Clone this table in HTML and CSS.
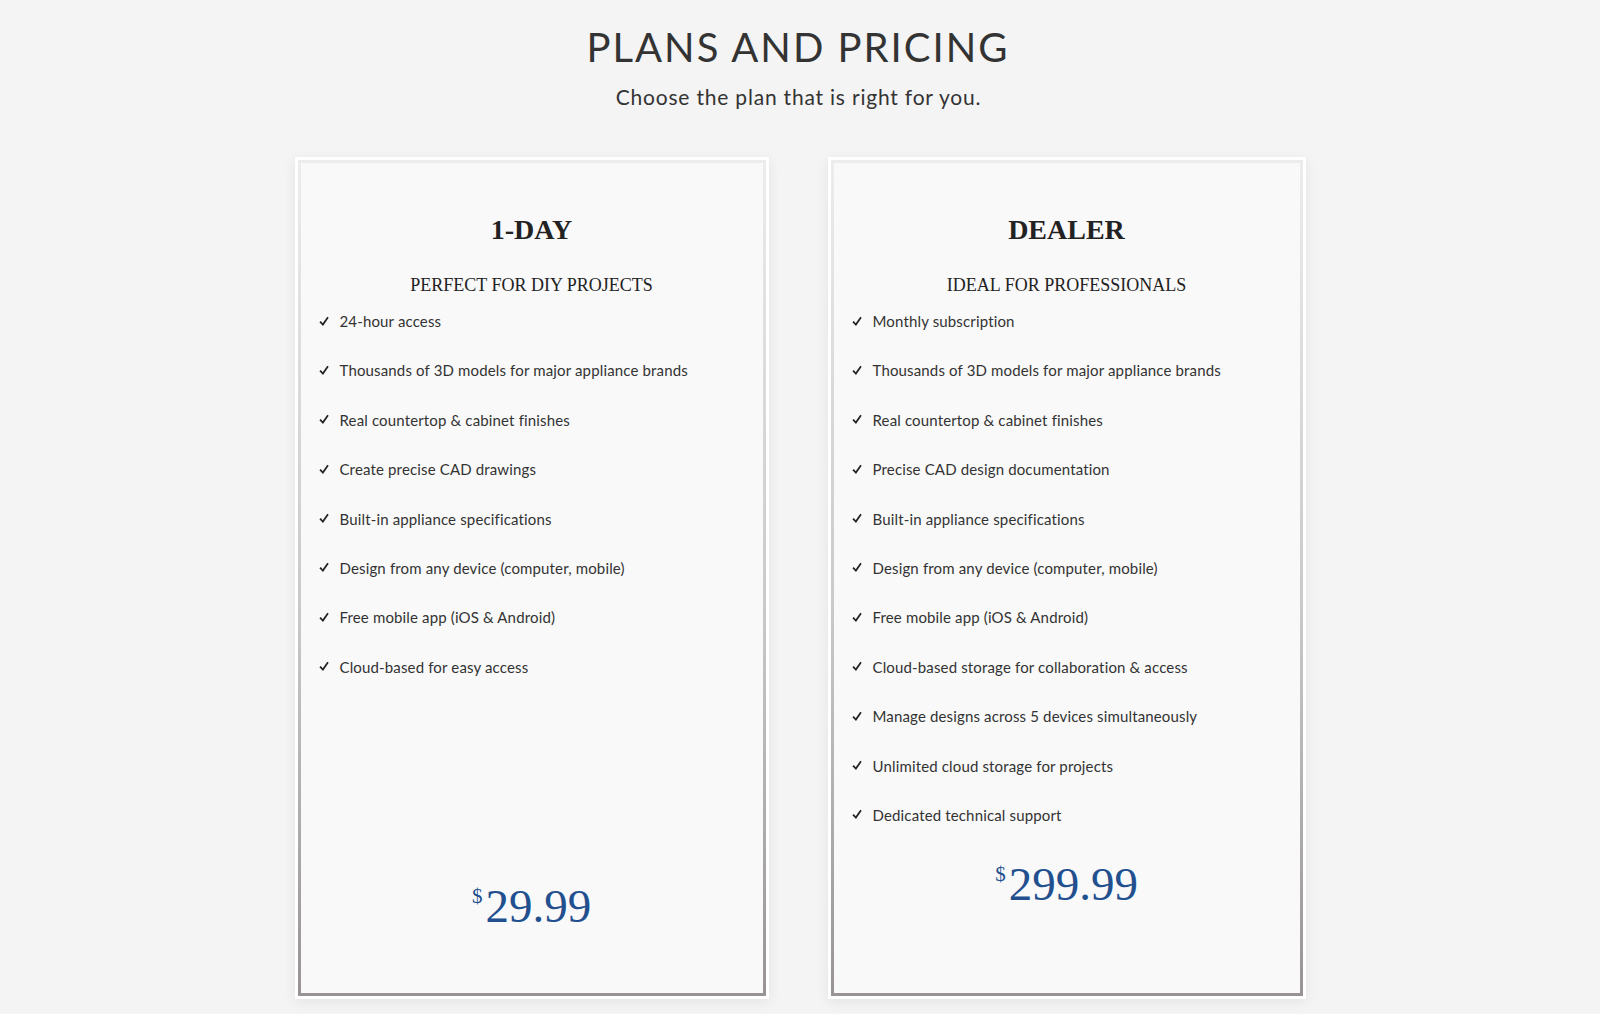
FILE: index.html
```html
<!DOCTYPE html>
<html lang="en">
<head>
<meta charset="utf-8">
<title>Plans and Pricing</title>
<link rel="stylesheet" href="styles.css">
</head>
<body>
<header class="intro">
  <h1 class="intro__title">PLANS AND PRICING</h1>
  <p class="intro__sub">Choose the plan that is right for you.</p>
</header>
<main class="plans">
  <section class="card card--day">
    <div class="card__inner">
      <h2 class="card__name">1-DAY</h2>
      <h3 class="card__tag">PERFECT FOR DIY PROJECTS</h3>
      <ul class="features">
        <li><svg class="tick" viewBox="0 0 10 10"><path d="M0.4 5.7 L1.8 4.6 L3.7 6.8 L8.3 0.3 L9.7 1.2 L4.0 9.5 Z"/></svg>24-hour access</li>
        <li><svg class="tick" viewBox="0 0 10 10"><path d="M0.4 5.7 L1.8 4.6 L3.7 6.8 L8.3 0.3 L9.7 1.2 L4.0 9.5 Z"/></svg>Thousands of 3D models for major appliance brands</li>
        <li><svg class="tick" viewBox="0 0 10 10"><path d="M0.4 5.7 L1.8 4.6 L3.7 6.8 L8.3 0.3 L9.7 1.2 L4.0 9.5 Z"/></svg>Real countertop &amp; cabinet finishes</li>
        <li><svg class="tick" viewBox="0 0 10 10"><path d="M0.4 5.7 L1.8 4.6 L3.7 6.8 L8.3 0.3 L9.7 1.2 L4.0 9.5 Z"/></svg>Create precise CAD drawings</li>
        <li><svg class="tick" viewBox="0 0 10 10"><path d="M0.4 5.7 L1.8 4.6 L3.7 6.8 L8.3 0.3 L9.7 1.2 L4.0 9.5 Z"/></svg>Built-in appliance specifications</li>
        <li><svg class="tick" viewBox="0 0 10 10"><path d="M0.4 5.7 L1.8 4.6 L3.7 6.8 L8.3 0.3 L9.7 1.2 L4.0 9.5 Z"/></svg>Design from any device (computer, mobile)</li>
        <li><svg class="tick" viewBox="0 0 10 10"><path d="M0.4 5.7 L1.8 4.6 L3.7 6.8 L8.3 0.3 L9.7 1.2 L4.0 9.5 Z"/></svg>Free mobile app (iOS &amp; Android)</li>
        <li><svg class="tick" viewBox="0 0 10 10"><path d="M0.4 5.7 L1.8 4.6 L3.7 6.8 L8.3 0.3 L9.7 1.2 L4.0 9.5 Z"/></svg>Cloud-based for easy access</li>
      </ul>
      <div class="price"><span class="price__cur">$</span>29.99</div>
    </div>
  </section>
  <section class="card card--dealer">
    <div class="card__inner">
      <h2 class="card__name">DEALER</h2>
      <h3 class="card__tag">IDEAL FOR PROFESSIONALS</h3>
      <ul class="features">
        <li><svg class="tick" viewBox="0 0 10 10"><path d="M0.4 5.7 L1.8 4.6 L3.7 6.8 L8.3 0.3 L9.7 1.2 L4.0 9.5 Z"/></svg>Monthly subscription</li>
        <li><svg class="tick" viewBox="0 0 10 10"><path d="M0.4 5.7 L1.8 4.6 L3.7 6.8 L8.3 0.3 L9.7 1.2 L4.0 9.5 Z"/></svg>Thousands of 3D models for major appliance brands</li>
        <li><svg class="tick" viewBox="0 0 10 10"><path d="M0.4 5.7 L1.8 4.6 L3.7 6.8 L8.3 0.3 L9.7 1.2 L4.0 9.5 Z"/></svg>Real countertop &amp; cabinet finishes</li>
        <li><svg class="tick" viewBox="0 0 10 10"><path d="M0.4 5.7 L1.8 4.6 L3.7 6.8 L8.3 0.3 L9.7 1.2 L4.0 9.5 Z"/></svg>Precise CAD design documentation</li>
        <li><svg class="tick" viewBox="0 0 10 10"><path d="M0.4 5.7 L1.8 4.6 L3.7 6.8 L8.3 0.3 L9.7 1.2 L4.0 9.5 Z"/></svg>Built-in appliance specifications</li>
        <li><svg class="tick" viewBox="0 0 10 10"><path d="M0.4 5.7 L1.8 4.6 L3.7 6.8 L8.3 0.3 L9.7 1.2 L4.0 9.5 Z"/></svg>Design from any device (computer, mobile)</li>
        <li><svg class="tick" viewBox="0 0 10 10"><path d="M0.4 5.7 L1.8 4.6 L3.7 6.8 L8.3 0.3 L9.7 1.2 L4.0 9.5 Z"/></svg>Free mobile app (iOS &amp; Android)</li>
        <li><svg class="tick" viewBox="0 0 10 10"><path d="M0.4 5.7 L1.8 4.6 L3.7 6.8 L8.3 0.3 L9.7 1.2 L4.0 9.5 Z"/></svg>Cloud-based storage for collaboration &amp; access</li>
        <li><svg class="tick" viewBox="0 0 10 10"><path d="M0.4 5.7 L1.8 4.6 L3.7 6.8 L8.3 0.3 L9.7 1.2 L4.0 9.5 Z"/></svg>Manage designs across 5 devices simultaneously</li>
        <li><svg class="tick" viewBox="0 0 10 10"><path d="M0.4 5.7 L1.8 4.6 L3.7 6.8 L8.3 0.3 L9.7 1.2 L4.0 9.5 Z"/></svg>Unlimited cloud storage for projects</li>
        <li><svg class="tick" viewBox="0 0 10 10"><path d="M0.4 5.7 L1.8 4.6 L3.7 6.8 L8.3 0.3 L9.7 1.2 L4.0 9.5 Z"/></svg>Dedicated technical support</li>
      </ul>
      <div class="price"><span class="price__cur">$</span>299.99</div>
    </div>
  </section>
</main>
</body>
</html>
```

FILE: styles.css
```css
* { box-sizing: border-box; }

html, body {
  margin: 0;
  padding: 0;
}

body {
  background: #f4f4f4;
  color: #333;
  font-family: Lato, "Noto Sans", "Liberation Sans", sans-serif;
  height: 1014px;
  overflow: hidden;
}

.intro {
  padding-top: 23px;
  text-align: center;
}

.intro__title {
  margin: 0;
  font-size: 40px;
  line-height: 48px;
  font-weight: 400;
  letter-spacing: 2px;
  padding-right: 4px;
  color: #333;
}

.intro__sub {
  margin: 13px 0 0;
  font-size: 21px;
  line-height: 25px;
  letter-spacing: 0.8px;
  padding-right: 3px;
  color: #333;
}

.plans {
  margin-top: 48px;
  display: grid;
  grid-template-columns: 474px 478px;
  justify-content: center;
  column-gap: 59px;
  align-items: stretch;
}

.card {
  background: #fff;
  padding: 3px;
  box-shadow: 0 3px 12px rgba(0, 0, 0, 0.07);
  display: flex;
}

.card__inner {
  flex: 1;
  display: flex;
  flex-direction: column;
  background: #f9f9f9;
  border: 3px solid transparent;
  border-image: linear-gradient(#ececec, #c9c7c8 55%, #989496) 1;
  padding: 51px 18px 85px;
}

.card--day .card__inner {
  padding-bottom: 63px;
}

.card__name {
  margin: 0;
  text-align: center;
  font-family: "Liberation Serif", "Times New Roman", serif;
  font-weight: 700;
  font-size: 28px;
  line-height: 32px;
  color: #222;
}

.card__tag {
  margin: 28px 0 0;
  text-align: center;
  font-family: "Liberation Serif", "Times New Roman", serif;
  font-weight: 400;
  font-size: 18px;
  line-height: 22px;
  color: #222;
}

.features {
  list-style: none;
  margin: 15px 0 0;
  padding: 0;
  display: flex;
  flex-direction: column;
  gap: 29.4px;
}

.features li {
  display: flex;
  align-items: center;
  font-size: 15px;
  line-height: 20px;
  letter-spacing: 0.15px;
  color: #333;
}

.tick {
  width: 10px;
  height: 11px;
  fill: #222;
  margin-right: 11px;
  flex: none;
}

.price {
  margin-top: auto;
  padding-top: 26px;
  text-align: center;
  font-family: "Liberation Serif", "Times New Roman", serif;
  font-size: 47px;
  line-height: 47px;
  color: #22508f;
}

.price__cur {
  font-size: 21px;
  vertical-align: 19px;
  margin-right: 3px;
}
```
